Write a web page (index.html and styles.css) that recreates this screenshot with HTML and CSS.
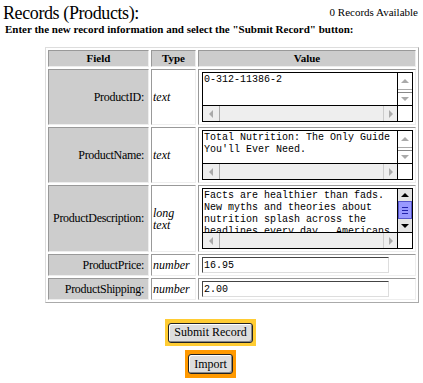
FILE: index.html
```html
<!DOCTYPE html>
<html lang="en">
  <head>
    <meta charset="UTF-8" />
    <title>Records (Products)</title>
    <link rel="stylesheet" href="styles.css">
  </head>
  <body>
    <div class="title-row">
      <h1 class="title">Records (Products):</h1>
      <span class="count">0 Records Available</span>
    </div>
    <p class="intro">Enter the new record information and select the "Submit Record" button:</p>

    <form id="record-form">
      <table class="records">
        <thead>
          <tr>
            <th class="col-field">Field</th>
            <th class="col-type">Type</th>
            <th class="col-value">Value</th>
          </tr>
        </thead>
        <tbody>
          <tr>
            <td class="field">ProductID:</td>
            <td class="type">text</td>
            <td class="value">
              <div class="textbox">
                <div class="textbox-text">0-312-11386-2</div>
                <div class="vscroll">
                  <div class="vbtn vbtn-up"><span class="arrow arrow-up"></span></div>
                  <div class="vtrack"></div>
                  <div class="vbtn vbtn-down"><span class="arrow arrow-down"></span></div>
                </div>
                <div class="hscroll">
                  <div class="hbtn hbtn-left"><span class="arrow arrow-left"></span></div>
                  <div class="hbtn hbtn-right"><span class="arrow arrow-right"></span></div>
                </div>
                <div class="corner"></div>
              </div>
            </td>
          </tr>
          <tr>
            <td class="field">ProductName:</td>
            <td class="type">text</td>
            <td class="value">
              <div class="textbox">
                <div class="textbox-text">Total Nutrition: The Only Guide You'll Ever Need.</div>
                <div class="vscroll">
                  <div class="vbtn vbtn-up"><span class="arrow arrow-up"></span></div>
                  <div class="vtrack"></div>
                  <div class="vbtn vbtn-down"><span class="arrow arrow-down"></span></div>
                </div>
                <div class="hscroll">
                  <div class="hbtn hbtn-left"><span class="arrow arrow-left"></span></div>
                  <div class="hbtn hbtn-right"><span class="arrow arrow-right"></span></div>
                </div>
                <div class="corner"></div>
              </div>
            </td>
          </tr>
          <tr>
            <td class="field">ProductDescription:</td>
            <td class="type">long text</td>
            <td class="value">
              <div class="textbox textbox-tall">
                <div class="textbox-text">Facts are healthier than fads. New myths and theories about nutrition splash across the headlines every day.  Americans are bombarded with advice.</div>
                <div class="vscroll vscroll-active">
                  <div class="vbtn vbtn-up"><span class="arrow arrow-up"></span></div>
                  <div class="vthumb">
                    <span></span><span></span><span></span>
                  </div>
                  <div class="vbtn vbtn-down"><span class="arrow arrow-down"></span></div>
                </div>
                <div class="hscroll">
                  <div class="hbtn hbtn-left"><span class="arrow arrow-left"></span></div>
                  <div class="hbtn hbtn-right"><span class="arrow arrow-right"></span></div>
                </div>
                <div class="corner"></div>
              </div>
            </td>
          </tr>
          <tr>
            <td class="field">ProductPrice:</td>
            <td class="type">number</td>
            <td class="value">
              <input type="text" class="line-input" name="price" value="16.95" />
            </td>
          </tr>
          <tr>
            <td class="field">ProductShipping:</td>
            <td class="type">number</td>
            <td class="value">
              <input type="text" class="line-input" name="shipping" value="2.00" />
            </td>
          </tr>
        </tbody>
      </table>

      <div class="actions">
        <div class="btn-frame btn-frame-submit">
          <button type="submit" class="btn">Submit Record</button>
        </div>
        <div class="btn-frame btn-frame-import">
          <button type="button" class="btn">Import</button>
        </div>
      </div>
    </form>
  </body>
</html>
```

FILE: styles.css
```css
body {
  margin: 0;
  padding: 3px 5px 0 3px;
  background-color: #fff;
  color: #000;
  font-family: "Liberation Serif", "Times New Roman", serif;
}

.title-row {
  display: flex;
  justify-content: space-between;
  align-items: flex-start;
}

.title {
  margin: 0;
  font-size: 18px;
  font-weight: normal;
  line-height: 20px;
  letter-spacing: -0.4px;
}

.count {
  padding-top: 3px;
  font-size: 11px;
  line-height: 13px;
}

.intro {
  margin: 0;
  padding-left: 2px;
  font-size: 11px;
  font-weight: bold;
  line-height: 12px;
}

form {
  margin: 0;
}

.records {
  margin: 12px 0 0 42px;
  width: 374px;
  table-layout: fixed;
  border-collapse: separate;
  border-spacing: 2px;
  border: 1px solid;
  border-color: #ddd #aaa #aaa #ddd;
}

.records th,
.records td {
  box-sizing: border-box;
  border: 1px solid;
  border-color: #999 #eee #eee #999;
}

.records th {
  padding: 1px 2px;
  background-color: #ccc;
  font-size: 11px;
  line-height: 13px;
  text-align: center;
}

.col-field {
  width: 101px;
}

.col-type {
  width: 45px;
}

.col-value {
  width: 218px;
}

.field {
  padding: 0 4px 0 2px;
  background-color: #cdcdcd;
  font-size: 12px;
  letter-spacing: -0.3px;
  text-align: right;
  vertical-align: middle;
}

.type {
  padding: 0 4px 0 1px;
  font-size: 12px;
  font-style: italic;
  line-height: 12px;
  vertical-align: middle;
}

.value {
  padding: 2px 2px 2px 3px;
}

/* old style scrolling text box */
.textbox {
  display: grid;
  grid-template-columns: 1fr 15px;
  grid-template-rows: 1fr 16px;
  box-sizing: border-box;
  width: 211px;
  height: 50px;
  border: 1px solid #000;
  background-color: #fff;
}

.textbox-tall {
  height: 61px;
}

.textbox-text {
  padding: 1px 0 0 1px;
  overflow: hidden;
  font-family: "Liberation Mono", "Courier New", monospace;
  font-size: 10px;
  line-height: 12px;
  white-space: pre-wrap;
}

.vscroll {
  display: flex;
  flex-direction: column;
  border-left: 1px solid #000;
}

.vbtn {
  display: flex;
  align-items: center;
  justify-content: center;
}

.vbtn-up {
  flex: 0 0 16px;
  border-bottom: 1px solid #aaa;
}

.vtrack {
  flex: 1;
}

.vbtn-down {
  flex: 0 0 12px;
  border-top: 1px solid #888;
}

.vscroll-active .vbtn {
  background-color: #e4e4e4;
  border: none;
}

.vscroll-active .vbtn-up {
  flex-basis: 12px;
}

.vscroll-active .vbtn-down {
  flex-basis: 13px;
}

.vthumb {
  flex: 1;
  display: flex;
  flex-direction: column;
  justify-content: center;
  gap: 2px;
  border: 1px solid #5555cc;
  background-color: #9999ff;
}

.vthumb span {
  display: block;
  height: 1px;
  margin: 0 3px;
  background-color: #2222aa;
}

.hscroll {
  display: flex;
  justify-content: space-between;
  border-top: 1px solid #000;
  background-color: #eee;
}

.hbtn {
  display: flex;
  align-items: center;
  justify-content: center;
}

.hbtn-left {
  width: 16px;
  border-right: 1px solid #aaa;
}

.hbtn-right {
  width: 13px;
  border-left: 1px solid #ccc;
}

.corner {
  border-top: 1px solid #000;
  border-left: 1px solid #000;
  background-color: #fff;
}

.arrow {
  width: 0;
  height: 0;
}

.arrow-up {
  border-left: 4px solid transparent;
  border-right: 4px solid transparent;
  border-bottom: 4px solid #aaa;
}

.arrow-down {
  border-left: 4px solid transparent;
  border-right: 4px solid transparent;
  border-top: 4px solid #aaa;
}

.arrow-left {
  border-top: 4px solid transparent;
  border-bottom: 4px solid transparent;
  border-right: 4px solid #aaa;
}

.arrow-right {
  border-top: 4px solid transparent;
  border-bottom: 4px solid transparent;
  border-left: 4px solid #aaa;
}

.vscroll-active .arrow-up {
  border-bottom-color: #000;
}

.vscroll-active .arrow-down {
  border-top-color: #000;
}

.line-input {
  display: block;
  box-sizing: border-box;
  width: 187px;
  height: 16px;
  margin: 0;
  padding: 0 1px;
  border: 1px solid;
  border-color: #444 #ddd #ddd #444;
  outline: none;
  font-family: "Liberation Mono", "Courier New", monospace;
  font-size: 10px;
}

.actions {
  display: flex;
  flex-direction: column;
  align-items: center;
  gap: 4px;
  margin-top: 16px;
}

.btn-frame {
  padding: 3px;
}

.btn-frame-submit {
  background-color: #ffcc33;
}

.btn-frame-import {
  padding: 4px 3px;
  background-color: #ff9900;
}

.btn {
  height: 20px;
  padding: 0 5px;
  border: 1px solid #222;
  border-radius: 3px;
  background-color: #ddd;
  box-shadow: inset 1px 1px 0 #fff, inset -1px -1px 0 #888;
  font-family: "Liberation Serif", "Times New Roman", serif;
  font-size: 12px;
  color: #000;
  cursor: pointer;
}
```
